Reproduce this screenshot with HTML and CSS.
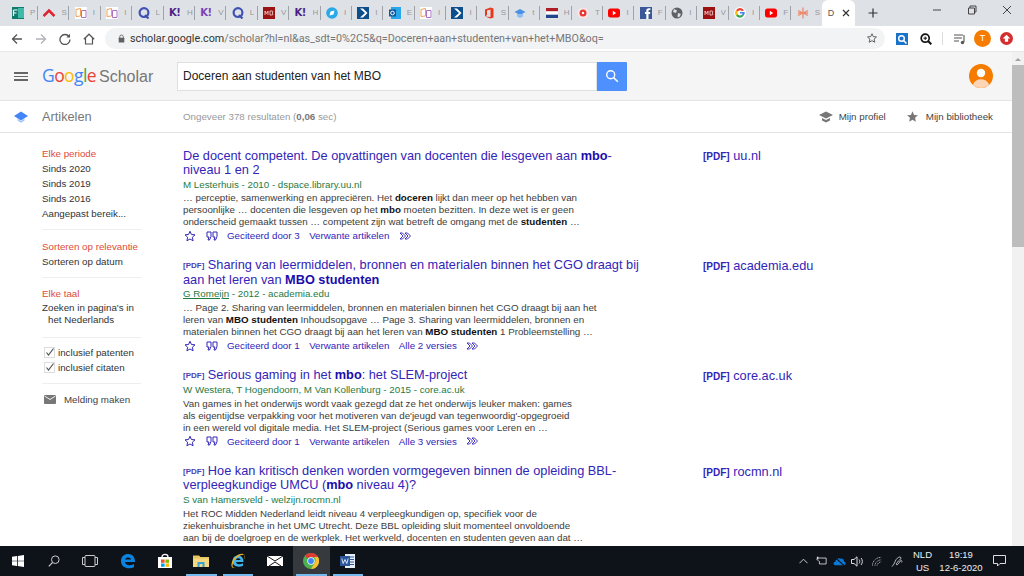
FILE: index.html
```html
<!DOCTYPE html>
<html lang="nl">
<head>
<meta charset="utf-8">
<title>Google Scholar</title>
<link rel="stylesheet" href="styles.css">
</head>
<body>
<svg class="defs" width="0" height="0">
  <symbol id="book" viewBox="0 0 12 12"><rect width="12" height="12" fill="#fff"/><path d="M1 2.500 5.500 1.500V9L1 9.500Z" fill="none" stroke="#f0a050"/><path d="M6.500 3.500H11V10.500H6.500Z" fill="none" stroke="#b070c8"/></symbol>
  <symbol id="q" viewBox="0 0 12 12"><circle cx="6" cy="5.600" r="4.400" fill="none" stroke="#3f51b5" stroke-width="2.200"/><path d="M7 8 10.500 11.500" stroke="#3f51b5" stroke-width="2.200"/></symbol>
  <symbol id="arrow" viewBox="0 0 12 12"><rect width="12" height="12" fill="#0d4f8b"/><path d="M3 1.500 8 6 3 10.500H6L10.500 6 6 1.500Z" fill="#fff"/></symbol>
  <symbol id="yt" viewBox="0 0 12 12"><rect y="1.500" width="12" height="9" rx="2.500" fill="#f00"/><path d="M4.800 3.800 8.200 6 4.800 8.200Z" fill="#fff"/></symbol>
  <symbol id="mb" viewBox="0 0 12 12"><rect width="12" height="12" fill="#9c1111"/><path d="M2 8V4L3.500 6.500 5 4V8M7 4V8H9.500L10 7 9 6 10 5 9.500 4Z" fill="none" stroke="#f4dcdc" stroke-width=".8"/></symbol>
  <symbol id="star" viewBox="0 0 24 24"><path d="M12 2.500 14.900 9l7.100.7-5.300 4.800 1.500 7L12 18l-6.200 3.500 1.500-7L2 9.700 9.100 9Z"/></symbol>
  <symbol id="quote" viewBox="0 0 12 10"><path d="M1 1H5V5.500L3.500 9H2L3 6H1ZM7 1H11V5.500L9.500 9H8L9 6H7Z" fill="none" stroke="currentColor"/></symbol>
  <symbol id="more" viewBox="0 0 12 8"><path d="M1 1H3.500L6.500 4 3.500 7H1L4 4ZM6 1H8.500L11.500 4 8.500 7H6L9 4Z" fill="none" stroke="currentColor" stroke-width=".9"/></symbol>
</svg>

<div class="tabstrip">
  <div class="tab"><svg class="fav" viewBox="0 0 12 12"><rect width="12" height="12" fill="#0f7b6c"/><rect x="6" y="1" width="6" height="10" fill="#3fb9a8"/><path d="M1.500 3H5.500M1.500 3V9M1.500 6H4.500" stroke="#fff" stroke-width="1.200"/></svg><span class="tl">P</span></div>
  <div class="tab"><svg class="fav" viewBox="0 0 12 12"><path d="M.5 9 6 3.500 11.500 9" fill="none" stroke="#e0202c" stroke-width="2.600"/></svg><span class="tl">S</span></div>
  <div class="tab"><svg class="fav"><use href="#book"/></svg><span class="tl">I</span></div>
  <div class="tab"><svg class="fav"><use href="#book"/></svg><span class="tl">I</span></div>
  <div class="tab"><svg class="fav"><use href="#q"/></svg><span class="tl">L</span></div>
  <div class="tab"><span class="kah dark">K!</span><span class="tl">H</span></div>
  <div class="tab"><span class="kah">K!</span><span class="tl">V</span></div>
  <div class="tab"><svg class="fav"><use href="#q"/></svg><span class="tl">L</span></div>
  <div class="tab"><svg class="fav"><use href="#mb"/></svg><span class="tl">V</span></div>
  <div class="tab"><span class="kah dark">K!</span><span class="tl">H</span></div>
  <div class="tab"><svg class="fav" viewBox="0 0 12 12"><circle cx="6" cy="6" r="5.800" fill="#29a8ea"/><path d="M3.500 8.500 4.500 4.500 8.500 3.500 7.500 7.500Z" fill="#fff"/></svg><span class="tl">I</span></div>
  <div class="tab"><svg class="fav"><use href="#arrow"/></svg><span class="tl">I</span></div>
  <div class="tab"><svg class="fav" viewBox="0 0 12 12"><rect x="2" width="10" height="12" fill="#28a8ea"/><rect y="2.500" width="7" height="7" fill="#0f5a9e"/><circle cx="3.500" cy="6" r="1.800" fill="none" stroke="#fff"/></svg><span class="tl">E</span></div>
  <div class="tab"><svg class="fav"><use href="#book"/></svg><span class="tl">I</span></div>
  <div class="tab"><svg class="fav"><use href="#arrow"/></svg><span class="tl">I</span></div>
  <div class="tab"><svg class="fav" viewBox="0 0 12 12"><path d="M2 2.500 7.500 .5 10.500 1.500V10.500L7.500 11.500 2 9.500 7.500 10V2.500L4 3.500V8L2 9.500Z" fill="#e8391b"/></svg><span class="tl">S</span></div>
  <div class="tab"><svg class="fav" viewBox="0 0 12 12"><path d="M.5 5 6 2 11.500 5 6 8Z" fill="#4a90e2"/><path d="M3 7H9V9.500L6 11 3 9.500Z" fill="#90bdf3"/></svg><span class="tl">t</span></div>
  <div class="tab"><svg class="fav" viewBox="0 0 12 12"><rect y="1" width="12" height="3.400" fill="#ae1c28"/><rect y="4.400" width="12" height="3.300" fill="#fff"/><rect y="7.700" width="12" height="3.300" fill="#21468b"/></svg><span class="tl">H</span></div>
  <div class="tab"><svg class="fav" viewBox="0 0 12 12"><circle cx="6" cy="6" r="5.500" fill="#fde4e4"/><circle cx="6" cy="6" r="3.500" fill="#e53935"/><circle cx="6" cy="6" r="1.200" fill="#fff"/></svg><span class="tl">T</span></div>
  <div class="tab"><svg class="fav"><use href="#yt"/></svg><span class="tl">I</span></div>
  <div class="tab"><svg class="fav" viewBox="0 0 12 12"><rect width="12" height="12" fill="#3b5998"/><path d="M8.500 12V7H10L10.300 5H8.500V4C8.500 3.300 8.800 3 9.500 3H10.400V1.300H8.800C7.200 1.300 6.300 2.300 6.300 3.800V5H5V7H6.300V12Z" fill="#fff"/></svg><span class="tl">F</span></div>
  <div class="tab"><svg class="fav" viewBox="0 0 12 12"><circle cx="6" cy="6" r="5.500" fill="#5f6368"/><path d="M3 2 6 3.500 5 6 2 5ZM7 6 10 7 8 10.500 6.500 9.500Z" fill="#dee1e6"/></svg><span class="tl">I</span></div>
  <div class="tab"><svg class="fav"><use href="#mb"/></svg><span class="tl">V</span></div>
  <div class="tab"><svg class="fav" viewBox="0 0 12 12"><circle cx="6" cy="6" r="6" fill="#fff"/><path d="M10 3.300A4.700 4.700 0 0 0 2 3.300L3.800 4.700A2.600 2.600 0 0 1 8 4.200Z" fill="#ea4335"/><path d="M2 3.300A4.700 4.700 0 0 0 2 8.700L3.800 7.300A2.600 2.600 0 0 1 3.800 4.700Z" fill="#fbbc05"/><path d="M2 8.700A4.700 4.700 0 0 0 9.600 8.800L8 7.500A2.600 2.600 0 0 1 3.800 7.300Z" fill="#34a853"/><path d="M6 5H10.600C10.900 6.500 10.400 7.800 9.600 8.800L8 7.500C8.300 7.200 8.400 6.900 8.500 6.600H6Z" fill="#4285f4"/></svg><span class="tl">I</span></div>
  <div class="tab"><svg class="fav"><use href="#yt"/></svg><span class="tl">F</span></div>
  <div class="tab last"><svg class="fav" viewBox="0 0 12 12"><path d="M6 .5V11.500M1 3.500 11 8.500M11 3.500 1 8.500M1 6H11" stroke="#ee8a70" stroke-width="1.300"/></svg><span class="tl">S</span></div>
  <div class="tab-active"><span class="at">D</span><svg class="tabx" viewBox="0 0 8 8"><path d="M1 1 7 7M7 1 1 7" stroke="#333" stroke-width="1.200"/></svg></div>
  <svg class="newtab" viewBox="0 0 10 10"><path d="M5 .5V9.500M.5 5H9.500" stroke="#333" stroke-width="1.200"/></svg>
  <div class="wincontrols">
    <svg class="wc" viewBox="0 0 10 10"><path d="M1 5H9" stroke="#444"/></svg>
    <svg class="wc" viewBox="0 0 10 10"><path d="M1.500 3H7.500V9H1.500ZM3 3V1H9V7H7.500" fill="none" stroke="#444"/></svg>
    <svg class="wc" viewBox="0 0 10 10"><path d="M1 1 9 9M9 1 1 9" stroke="#444"/></svg>
  </div>
</div>

<div class="toolbar">
  <svg class="nav" viewBox="0 0 12 12"><path d="M11 6H1.500M6 1.500 1.500 6 6 10.500" fill="none" stroke="#555" stroke-width="1.300"/></svg>
  <svg class="nav" viewBox="0 0 12 12"><path d="M1 6H10.500M6 1.500 10.500 6 6 10.500" fill="none" stroke="#b0b3b8" stroke-width="1.300"/></svg>
  <svg class="nav" viewBox="0 0 12 12"><path d="M10 3.500A5 5 0 1 0 11 6.500" fill="none" stroke="#555" stroke-width="1.300"/><path d="M11 .8V4.500H7.300Z" fill="#555"/></svg>
  <svg class="nav" viewBox="0 0 12 12"><path d="M.8 6.300 6 1.200 11.200 6.300M2.500 5V11H9.500V5" fill="none" stroke="#555" stroke-width="1.200"/></svg>
  <div class="omnibox">
    <svg class="lock" viewBox="0 0 8 10"><path d="M2 4.500V3A2 2 0 0 1 6 3V4.500" fill="none" stroke="#5f6368"/><rect x=".8" y="4" width="6.400" height="5.500" rx=".6" fill="#5f6368"/></svg>
    <span class="url"><span class="host">scholar.google.com</span>/scholar?hl=nl&amp;as_sdt=0%2C5&amp;q=Doceren+aan+studenten+van+het+MBO&amp;oq=</span>
    <svg class="ostar" viewBox="0 0 24 24"><path d="M12 3.500 14.600 9.300l6.400.6-4.800 4.300 1.400 6.300L12 17.300l-5.600 3.200 1.400-6.300L3 9.900l6.400-.6Z" fill="none" stroke="#5f6368" stroke-width="2"/></svg>
  </div>
  <div class="ext">
    <svg class="ex1" viewBox="0 0 12 12"><rect width="12" height="12" fill="#1a73c8"/><circle cx="5.500" cy="5.500" r="2.800" fill="none" stroke="#fff" stroke-width="1.400"/><path d="M7.500 7.500 10.500 10.500" stroke="#fff" stroke-width="1.500"/></svg>
    <svg class="ex2" viewBox="0 0 12 12"><circle cx="5.200" cy="5.200" r="4" fill="none" stroke="#111" stroke-width="1.700"/><path d="M8 8 11.300 11.300" stroke="#111" stroke-width="2"/><path d="M3.500 5.200H7M5.200 3.500V7" stroke="#111"/></svg>
    <i class="extsep"></i>
    <svg class="ex3" viewBox="0 0 12 12"><path d="M0 2H9M0 5H8M0 8H5" stroke="#555" stroke-width="1.100"/><path d="M10 2V9" stroke="#555" stroke-width="1.100"/><circle cx="8.500" cy="9.500" r="1.700" fill="#555"/></svg>
    <span class="profile-t">T</span>
    <svg class="ex4" viewBox="0 0 12 12"><circle cx="6" cy="6" r="6" fill="#d32f2f"/><path d="M6 2.500 9.500 6H7.500V9H4.500V6H2.500Z" fill="#fff"/></svg>
  </div>
</div>

<div class="viewport">
  <div class="page">
    <header class="gs-head">
      <div class="burger"><i></i><i></i><i></i></div>
      <div class="logo"><span class="g1">G</span><span class="g2">o</span><span class="g3">o</span><span class="g1">g</span><span class="g4">l</span><span class="g2">e</span><span class="sch">Scholar</span></div>
      <div class="search"><div class="sinput">Doceren aan studenten van het MBO</div><div class="sbtn"><svg viewBox="0 0 14 14"><circle cx="5.700" cy="5.700" r="4" fill="none" stroke="#fff" stroke-width="1.400"/><path d="M8.500 8.500 12.800 12.800" stroke="#fff" stroke-width="1.600"/></svg></div></div>
      <svg class="avatar" viewBox="0 0 24 24"><circle cx="12" cy="12" r="12" fill="#f57c00"/><circle cx="12" cy="9" r="4.200" fill="#fff"/><path d="M3.900 20.800C5.500 17 8.500 15.300 12 15.300S18.500 17 20.100 20.800A12 12 0 0 1 3.900 20.800Z" fill="#fcd5b5"/></svg>
    </header>
    <div class="subbar">
      <svg class="capsicon" viewBox="0 0 14 12"><path d="M0 5 7 .5 14 5 7 9.500Z" fill="#4285f4"/><path d="M3.500 7.800 7 10 10.500 7.800V9.500L7 11.800 3.500 9.500Z" fill="#a1c2fa"/></svg>
      <span class="art">Artikelen</span>
      <span class="count">Ongeveer 378 resultaten (<b>0,06</b> sec)</span>
      <div class="sublinks">
        <svg class="capg" viewBox="0 0 14 12"><path d="M0 4 7 .5 14 4 7 7.500Z" fill="#777"/><path d="M3 7V9.500L7 11.500 11 9.500V7L7 9Z" fill="#777"/></svg><span class="sl1">Mijn profiel</span>
        <svg class="stargrey"><use href="#star"/></svg><span>Mijn bibliotheek</span>
      </div>
    </div>
    <div class="main">
      <aside class="side">
        <div class="sgroup g-time"><div class="red">Elke periode</div><div>Sinds 2020</div><div>Sinds 2019</div><div>Sinds 2016</div><div>Aangepast bereik...</div></div>
        <div class="sgroup"><div class="red">Sorteren op relevantie</div><div>Sorteren op datum</div></div>
        <div class="sgroup g-lang"><div class="red">Elke taal</div><div class="twoline">Zoeken in pagina's in<br><span class="ind">het Nederlands</span></div></div>
        <div class="sgroup"><label class="chk"><svg viewBox="0 0 11 11"><rect x=".5" y=".5" width="10" height="10" fill="#fff" stroke="#ddd"/><path d="M2.500 5.500 4.500 8 9.500 1.500" fill="none" stroke="#555" stroke-width="1.200"/></svg>inclusief patenten</label><label class="chk"><svg viewBox="0 0 11 11"><rect x=".5" y=".5" width="10" height="10" fill="#fff" stroke="#ddd"/><path d="M2.500 5.500 4.500 8 9.500 1.500" fill="none" stroke="#555" stroke-width="1.200"/></svg>inclusief citaten</label></div>
        <div class="sgroup nob"><div class="mail"><svg viewBox="0 0 12 9"><rect width="12" height="9" rx="1" fill="#777"/><path d="M.5 1 6 4.500 11.500 1" fill="none" stroke="#fff" stroke-width=".9"/></svg>Melding maken</div></div>
      </aside>
      <div class="results">
        <article class="res">
          <div class="ttl">De docent competent. De opvattingen van docenten die lesgeven aan <b>mbo</b>-<br>niveau 1 en 2</div>
          <div class="auth">M Lesterhuis - 2010 - dspace.library.uu.nl</div>
          <div class="snip">… perceptie, samenwerking en appreciëren. Het <b>doceren</b> lijkt dan meer op het hebben van<br>persoonlijke … docenten die lesgeven op het <b>mbo</b> moeten bezitten. In deze wet is er geen<br>onderscheid gemaakt tussen … competent zijn wat betreft de omgang met de <b>studenten</b> …</div>
          <div class="acts"><svg class="astar"><use href="#star"/></svg><svg class="aq"><use href="#quote"/></svg><span>Geciteerd door 3</span><span>Verwante artikelen</span><svg class="am"><use href="#more"/></svg></div>
        </article>
        <article class="res">
          <div class="ttl"><span class="pdf">[PDF]</span> Sharing van leermiddelen, bronnen en materialen binnen het CGO draagt bij<br>aan het leren van <b>MBO studenten</b></div>
          <div class="auth"><u>G Romeijn</u> - 2012 - academia.edu</div>
          <div class="snip">… Page 2. Sharing van leermiddelen, bronnen en materialen binnen het CGO draagt bij aan het<br>leren van <b>MBO studenten</b> Inhoudsopgave … Page 3. Sharing van leermiddelen, bronnen en<br>materialen binnen het CGO draagt bij aan het leren van <b>MBO studenten</b> 1 Probleemstelling …</div>
          <div class="acts"><svg class="astar"><use href="#star"/></svg><svg class="aq"><use href="#quote"/></svg><span>Geciteerd door 1</span><span>Verwante artikelen</span><span>Alle 2 versies</span><svg class="am"><use href="#more"/></svg></div>
        </article>
        <article class="res">
          <div class="ttl"><span class="pdf">[PDF]</span> Serious gaming in het <b>mbo</b>: het SLEM-project</div>
          <div class="auth">W Westera, T Hogendoorn, M Van Kollenburg - 2015 - core.ac.uk</div>
          <div class="snip">Van games in het onderwijs wordt vaak gezegd dat ze het onderwijs leuker maken: games<br>als eigentijdse verpakking voor het motiveren van de'jeugd van tegenwoordig'-opgegroeid<br>in een wereld vol digitale media. Het SLEM-project (Serious games voor Leren en …</div>
          <div class="acts"><svg class="astar"><use href="#star"/></svg><svg class="aq"><use href="#quote"/></svg><span>Geciteerd door 1</span><span>Verwante artikelen</span><span>Alle 3 versies</span><svg class="am"><use href="#more"/></svg></div>
        </article>
        <article class="res">
          <div class="ttl"><span class="pdf">[PDF]</span> Hoe kan kritisch denken worden vormgegeven binnen de opleiding BBL-<br>verpleegkundige UMCU (<b>mbo</b> niveau 4)?</div>
          <div class="auth">S van Hamersveld - welzijn.rocmn.nl</div>
          <div class="snip">Het ROC Midden Nederland leidt niveau 4 verpleegkundigen op, specifiek voor de<br>ziekenhuisbranche in het UMC Utrecht. Deze BBL opleiding sluit momenteel onvoldoende<br>aan bij de doelgroep en de werkplek. Het werkveld, docenten en studenten geven aan dat …</div>
        </article>
      </div>
      <div class="pdfs">
        <div class="pl p1"><span class="pt">[PDF]</span> uu.nl</div>
        <div class="pl p2"><span class="pt">[PDF]</span> academia.edu</div>
        <div class="pl p3"><span class="pt">[PDF]</span> core.ac.uk</div>
        <div class="pl p4"><span class="pt">[PDF]</span> rocmn.nl</div>
      </div>
    </div>
  </div>
  <div class="scrollbar"><svg class="sup" viewBox="0 0 8 4"><path d="M4 0 8 4H0Z" fill="#a0a0a0"/></svg><div class="thumb"></div></div>
</div>

<footer class="taskbar">
  <svg class="ti win" viewBox="0 0 12 12"><path d="M0 1.700 5 1V5.700H0ZM5.800 .9 12 0V5.700H5.800ZM0 6.300H5V11L0 10.300ZM5.800 6.300H12V12L5.800 11.100Z" fill="#fff"/></svg>
  <svg class="ti srch" viewBox="0 0 12 12"><circle cx="7.300" cy="4.700" r="3.800" fill="none" stroke="#ccc"/><path d="M4.500 7.500 .8 11.300" stroke="#ccc" stroke-width="1.100"/></svg>
  <svg class="ti tv" viewBox="0 0 16 12"><rect x="3" y=".5" width="10" height="11" rx="1" fill="none" stroke="#ccc"/><path d="M3 2.500H.5V9.500H3M13 2.500H15.500V9.500H13" fill="none" stroke="#ccc"/></svg>
  <span class="app"><svg viewBox="0 0 16 16"><path d="M1 8C1 3.500 4.300 1 8.200 1 12.300 1 15 3.800 15 9H5C5.500 12.500 10 13.300 14 11V14.300C8.500 16.500 1 15 1 8ZM5 6.500H11C10.800 4 6 3.800 5 6.500Z" fill="#0a84e0"/></svg></span>
  <span class="app"><svg viewBox="0 0 16 16"><path d="M1 4H15V15H1Z" fill="#fff"/><path d="M5 4C5 .5 11 .5 11 4" fill="none" stroke="#fff" stroke-width="1.300"/><rect x="4" y="6.500" width="3.600" height="3.300" fill="#f25022"/><rect x="8.400" y="6.500" width="3.600" height="3.300" fill="#7fba00"/><rect x="4" y="10.500" width="3.600" height="3.300" fill="#00a4ef"/><rect x="8.400" y="10.500" width="3.600" height="3.300" fill="#ffb900"/></svg></span>
  <span class="app ul"><svg viewBox="0 0 16 16"><path d="M0 2.500H6L7.500 4H16V14H0Z" fill="#e8c45e"/><rect x="0" y="5.500" width="16" height="8.500" fill="#f6d97e"/><path d="M4.500 9H11.500V14H9.500V11H6.500V14H4.500Z" fill="#3aa0d8"/></svg></span>
  <span class="app ul"><svg viewBox="0 0 16 16"><path d="M2.500 8.500C2.500 4.500 5 2.500 8 2.500 11.500 2.500 13.500 5 13.500 9H6C6.300 11.500 10 12 13 10.300V12.800C8 15 2.500 13 2.500 8.500ZM6 7H10.500C10.300 4.800 6.500 4.800 6 7Z" fill="#3fb3ea"/><path d="M13 1C10 0 4 3.500 2 9 .5 13.500 2 15.500 5 14.500 1.500 15 2.500 11 4 8 6 4.500 11 1 14.500 2 15 3 14.500 5 13.500 7 15.500 4 15.800 2 13 1Z" fill="#f0b428"/></svg></span>
  <span class="app"><svg viewBox="0 0 16 16"><path d="M0 3H16V13H0Z" fill="#fff"/><path d="M0 3 8 8 16 3M2 13 8 9 14 13" fill="none" stroke="#111"/></svg></span>
  <span class="app act ul"><svg viewBox="0 0 16 16"><circle cx="8" cy="8" r="8" fill="#4caf50"/><path d="M8 0A8 8 0 0 1 15 4H8A4 4 0 0 0 4.500 6L2 2.400A8 8 0 0 1 8 0Z" fill="#e53935"/><path d="M15 4A8 8 0 0 1 8 16L11.500 10A4 4 0 0 0 11 4Z" fill="#fbc02d"/><circle cx="8" cy="8" r="3.700" fill="#fff"/><circle cx="8" cy="8" r="2.900" fill="#4285f4"/></svg></span>
  <span class="app ul"><svg viewBox="0 0 16 16"><rect x="5" y="1" width="10" height="14" fill="#e8eef7"/><path d="M9 4H14M9 6.500H14M9 9H14M9 11.500H14" stroke="#2b579a"/><rect x="0" y="3" width="10" height="10" fill="#2b579a"/><path d="M1.800 5.500 3.200 10.500 5 6.500 6.800 10.500 8.200 5.500" fill="none" stroke="#fff" stroke-width=".8"/></svg></span>
  <div class="tray">
    <svg class="t1" viewBox="0 0 10 6"><path d="M.5 5.500 5 1 9.500 5.500" fill="none" stroke="#ddd"/></svg>
    <svg class="t2" viewBox="0 0 13 10"><path d="M3 1.500H12V8.500H4V5" fill="none" stroke="#ddd"/><path d="M.5 2.500 3 5" stroke="#ddd"/><rect x="1" y="0" width="2" height="3" fill="#ddd"/></svg>
    <svg class="t3" viewBox="0 0 14 10"><path d="M2.500 9.500C0 9.500 0 6 2.500 5.800 3 2.500 6 1 8 2.500 10.500 2 12 4 11.800 5.500 14.500 6 14 9.500 11.500 9.500Z" fill="#0a78d4"/><path d="M2 1 12 10" stroke="#101418" stroke-width="1.200"/></svg>
    <svg class="t4" viewBox="0 0 13 11"><path d="M.5 3.500H3L6 .8V10.200L3 7.500H.5Z" fill="none" stroke="#ddd"/><path d="M8 3.500C9 4.500 9 6.500 8 7.500M10 2C11.800 4 11.800 7 10 9" fill="none" stroke="#ddd"/></svg>
    <svg class="t5" viewBox="0 0 12 11"><path d="M.5 10.500C.5 5 5 .5 11 .5M3.500 10.500C3.500 7 7 3.500 11 3.500M6 10.500C6 8.500 8.500 6 11 6" fill="none" stroke="#bbb" stroke-dasharray="1.500 .7"/></svg>
    <svg class="t6" viewBox="0 0 13 13"><path d="M1 12C4 9 4 7 5.500 4.500 7 2.200 9.500 1 10.500 2S9.500 5 8 6C7 8 5 9 6 10 7 10.500 9 8 10 6 11 4.500 12.500 6 11.500 7.500" fill="none" stroke="#ddd" stroke-width=".9"/></svg>
    <div class="lang">NLD<br>US</div>
    <div class="clock">19:19<br>12-6-2020</div>
    <svg class="t7" viewBox="0 0 13 12"><path d="M.5 .5H12.500V8.500H7L4.500 11V8.500H.5Z" fill="none" stroke="#ddd"/></svg>
  </div>
</footer>
</body>
</html>
```

FILE: styles.css
```css
* { box-sizing: border-box; }
html, body { margin: 0; padding: 0; }
body {
  width: 1024px; height: 576px; overflow: hidden;
  display: flex; flex-direction: column;
  font-family: "Liberation Sans", Arial, sans-serif;
  background: #fff; color: #222;
}
.defs { position: absolute; }

/* tab strip */
.tabstrip { height: 26px; flex: none; background: #dee1e6; display: flex; align-items: flex-start; padding-left: 6.600px; }
.tab { width: 31.400px; height: 26px; flex: none; position: relative; display: flex; align-items: center; padding: 0 0 1px 5.400px; }
.tab::after { content: ""; position: absolute; right: 0; top: 6px; height: 14px; width: 1px; background: #9fa2a7; }
.tab.last::after { display: none; }
.fav { width: 12px; height: 12px; flex: none; }
.kah { width: 12px; flex: none; font-size: 10px; font-weight: 700; letter-spacing: -.5px; color: #7d3fb8; font-family: "DejaVu Sans", sans-serif; line-height: 12px; }
.kah.dark { color: #4a1f85; }
.tl { margin-left: 6px; font-size: 8px; color: #999; width: 6px; overflow: hidden; }
.tab-active { width: 33px; height: 26px; margin-left: -1px; flex: none; background: #fff; border-radius: 6px 6px 0 0; display: flex; align-items: center; padding: 0 0 1px 6px; }
.at { font-size: 9px; color: #555; width: 10px; }
.tabx { width: 8px; height: 8px; margin-left: 4px; }
.newtab { width: 10px; height: 10px; margin: 8px 0 0 13px; flex: none; }
.wincontrols { margin-left: auto; display: flex; gap: 25px; padding: 5px 12px 0 0; }
.wc { width: 10px; height: 10px; }

/* toolbar */
.toolbar { height: 26px; flex: none; background: #fff; display: flex; align-items: center; padding-left: 11px; border-bottom: 1px solid #e8e8e8; }
.nav { width: 12px; height: 12px; margin-right: 12px; flex: none; }
.nav:nth-child(4) { margin-right: 10px; }
.omnibox { width: 780px; height: 21px; margin-top: -1px; border-radius: 11px; background: #f1f3f4; display: flex; align-items: center; padding: 0 7px 0 13px; flex: none; }
.lock { width: 7px; height: 9px; flex: none; }
.url { margin-left: 5px; font-size: 10.750px; color: #777; white-space: nowrap; font-family: "Roboto", sans-serif; }
.host { color: #333; }
.ostar { width: 12px; height: 12px; margin-left: auto; }
.ext { flex: 1; display: flex; align-items: center; padding-left: 11px; }
.ex1 { width: 12px; height: 12px; }
.ex2 { width: 12px; height: 12px; margin-left: 12px; }
.extsep { width: 1px; height: 13px; background: #ddd; margin-left: 10px; }
.ex3 { width: 12px; height: 12px; margin-left: 11px; }
.profile-t { width: 17px; height: 17px; border-radius: 50%; background: #f57c00; color: #fff; font-size: 9px; line-height: 17px; text-align: center; margin-left: 8px; }
.ex4 { width: 13px; height: 13px; margin-left: 9px; }

/* page */
.viewport { flex: 1; min-height: 0; display: flex; overflow: hidden; }
.page { flex: 1; min-width: 0; overflow: hidden; }
.scrollbar { width: 12px; flex: none; background: #f1f1f1; display: flex; flex-direction: column; align-items: center; }
.sup { width: 6px; height: 3px; margin: 6px 0 4px; }
.thumb { width: 12px; height: 182px; background: #bdbdbd; }

.gs-head { height: 49px; background: #f5f5f5; border-bottom: 1px solid #e4e4e4; display: flex; align-items: center; padding: 0 19px 0 14px; }
.burger { width: 14px; display: flex; flex-direction: column; gap: 2px; margin-top: 1px; }
.burger i { display: block; height: 1.400px; background: #666; }
.logo { margin-left: 14px; width: 135px; font-size: 17.500px; font-family: "Open Sans", sans-serif; white-space: nowrap; letter-spacing: -.6px; margin-top: -3px; }
.g1 { color: #4285f4; } .g2 { color: #ea4335; } .g3 { color: #fbbc05; } .g4 { color: #34a853; }
.sch { color: #777; margin-left: 3px; font-family: "Liberation Sans", sans-serif; font-size: 16px; letter-spacing: 0; }
.search { display: flex; height: 29px; }
.sinput { width: 420px; background: #fff; border: 1px solid #e0e0e0; font-size: 12px; line-height: 27px; padding-left: 5px; color: #222; }
.sbtn { width: 30px; background: #4d90fe; border-radius: 0 1px 1px 0; display: flex; align-items: center; justify-content: center; }
.sbtn svg { width: 14px; height: 14px; }
.avatar { width: 24px; height: 24px; margin-left: auto; flex: none; }

.subbar { height: 32px; display: flex; align-items: center; border-bottom: 1px solid #e4e4e4; padding-left: 14px; padding-right: 19px; }
.capsicon { width: 14px; height: 12px; flex: none; }
.art { margin-left: 14px; width: 141px; font-size: 12.750px; color: #777; flex: none; }
.count { font-size: 9.750px; color: #999; }
.count b { color: #777; }
.sublinks { margin-left: auto; display: flex; align-items: center; font-size: 9.750px; color: #444; }
.capg { width: 14px; height: 12px; margin-right: 6px; }
.sl1 { margin-right: 20px; }
.stargrey { width: 13px; height: 13px; fill: #777; margin-right: 7px; }

.main { display: grid; grid-template-columns: 183px 520px 1fr; }
.side { padding: 13px 0 0 42px; font-size: 9.750px; line-height: 15px; color: #333; width: 183px; }
.sgroup { width: 99px; border-bottom: 1px solid #eee; padding-bottom: 8px; margin-bottom: 8px; white-space: nowrap; }
.sgroup.g-time { margin-bottom: 9px; }
.sgroup.g-lang { margin-bottom: 7px; }
.sgroup.nob { border: 0; }
.red { color: #dd4b39; }
.twoline { line-height: 12px; padding-top: 1px; padding-bottom: 3px; }
.ind { padding-left: 6px; }
.chk { display: flex; align-items: center; color: #333; }
.chk svg { width: 11px; height: 11px; margin: 0 3px 0 2px; flex: none; }
.mail { display: flex; align-items: center; color: #444; }
.mail svg { width: 12px; height: 9px; margin: 0 8px 0 2px; }

.results { padding-top: 15.500px; white-space: nowrap; }
.res { margin-bottom: 15.100px; }
.ttl { font-size: 12.750px; line-height: 14.500px; color: #3225b8; }
.ttl b { color: #1a0dab; }
.pdf { font-size: 8px; line-height: 0; font-weight: 700; color: #4a3fb0; position: relative; top: -1px; }
.auth { font-size: 9.750px; line-height: 14px; color: #1f7a3f; }
.auth u { text-underline-offset: 1px; }
.snip { font-size: 9.750px; line-height: 12.100px; color: #3c3c3c; margin-top: .6px; }
.snip b { color: #111; }
.acts { height: 15px; display: flex; align-items: center; font-size: 9.750px; color: #3225b8; }
.acts span { margin-right: 9.500px; }
.astar { width: 12px; height: 12px; fill: none; stroke: #3225b8; stroke-width: 2; margin: 0 10px 0 1px; }
.aq { width: 12px; height: 10px; color: #3225b8; margin-right: 9px; }
.am { width: 12px; height: 8px; color: #3225b8; }

.pdfs { padding-top: 15.500px; }
.pl { font-size: 12.750px; line-height: 14px; color: #3225b8; }
.pt { font-size: 10px; font-weight: 700; }
.p1 { height: 110px; } .p2 { height: 110px; } .p3 { height: 96px; }

/* taskbar */
.taskbar { height: 30px; flex: none; background: #0e131a; display: flex; align-items: center; padding-left: 12px; }
.ti { flex: none; }
.win { width: 12px; height: 12px; }
.srch { width: 12px; height: 12px; margin-left: 24px; }
.tv { width: 16px; height: 12px; margin-left: 22px; }
.app { width: 36.700px; height: 30px; flex: none; display: flex; align-items: center; justify-content: center; position: relative; }
.app:first-of-type { margin-left: 11.600px; }
.app svg { width: 16px; height: 16px; }
.app.act { background: #363a3e; }
.app.ul::after { content: ""; position: absolute; left: 3px; right: 3px; bottom: 0; height: 2px; background: #76b9ed; }
.tray { margin-left: auto; display: flex; align-items: center; color: #eee; font-size: 9.500px; padding-right: 18px; }
.tray svg { flex: none; }
.t1 { width: 9px; height: 6px; }
.t2 { width: 11px; height: 10px; margin-left: 8px; }
.t3 { width: 13px; height: 10px; margin-left: 6px; }
.t4 { width: 13px; height: 11px; margin-left: 5px; }
.t5 { width: 10px; height: 11px; margin-left: 8px; }
.t6 { width: 12px; height: 13px; margin-left: 9px; }
.lang { margin-left: 8.500px; width: 22px; text-align: center; line-height: 13.500px; }
.clock { margin-left: 5.500px; width: 44px; text-align: center; line-height: 13.500px; }
.t7 { width: 13px; height: 12px; margin-left: 10px; }
```
